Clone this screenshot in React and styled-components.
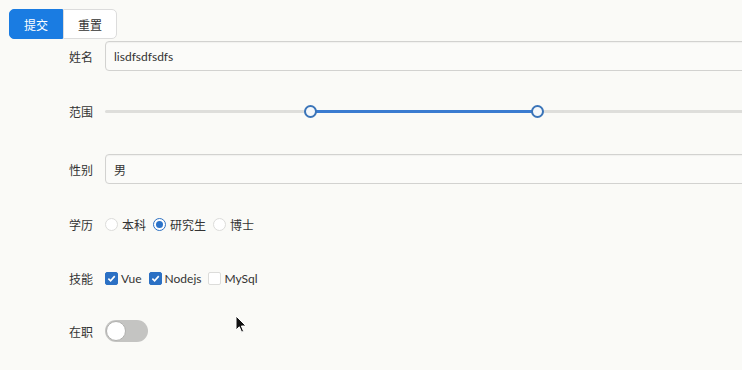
import React, { useState } from 'react';
import styled, { createGlobalStyle } from 'styled-components';

const GlobalStyle = createGlobalStyle`
  html, body {
    margin: 0;
    padding: 0;
    background: #fafaf7;
    overflow: hidden;
  }
  body {
    font-family: Lato, "Noto Sans CJK SC", sans-serif;
    font-size: 12px;
    color: #333;
  }
`;

const Page = styled.div`
  position: relative;
  width: 742px;
  height: 370px;
  padding: 9px 0 0 9px;
  box-sizing: border-box;
  overflow: hidden;
`;

const ButtonGroup = styled.div`
  display: flex;
  height: 30px;
`;

const Button = styled.button`
  width: 54px;
  height: 30px;
  font-family: inherit;
  font-size: 12px;
  border-radius: ${(p) => (p.$primary ? '5px 0 0 5px' : '0 5px 5px 0')};
  border: 1px solid ${(p) => (p.$primary ? '#1a7ce2' : '#dcdcdc')};
  background: ${(p) => (p.$primary ? '#1a7ce2' : '#fff')};
  color: ${(p) => (p.$primary ? '#fff' : '#333')};
  cursor: pointer;
  padding: 0;
`;

const Form = styled.div`
  display: flex;
  flex-direction: column;
  margin-top: 2px;
`;

const Row = styled.div`
  display: flex;
  align-items: center;
  height: 30px;
  margin-bottom: ${(p) => p.$space || 25}px;
`;

const Label = styled.div`
  width: 96px;
  box-sizing: border-box;
  display: flex;
  justify-content: flex-end;
  padding-right: 12px;
  flex-shrink: 0;
  color: #333;
  white-space: nowrap;
`;

const TextInput = styled.input`
  width: 700px;
  height: 30px;
  box-sizing: border-box;
  border: 1px solid #d2d2d0;
  border-radius: 4px;
  background: #fbfbf9;
  padding: 0 8px;
  font-family: inherit;
  font-size: 12px;
  color: #333;
  box-shadow: inset 0 1px 1px rgba(0, 0, 0, 0.04);
  outline: none;
  flex-shrink: 0;
`;

const Slider = styled.div`
  position: relative;
  width: 686px;
  height: 30px;
  flex-shrink: 0;
`;

const Track = styled.div`
  position: absolute;
  left: 0;
  right: 0;
  top: 14px;
  height: 3px;
  background: #dededb;
  border-radius: 2px;
`;

const ActiveTrack = styled.div`
  position: absolute;
  top: 14px;
  height: 3px;
  background: #3a7bd0;
`;

const Thumb = styled.div`
  position: absolute;
  top: 9px;
  width: 13px;
  height: 13px;
  margin-left: -6.5px;
  box-sizing: border-box;
  border-radius: 50%;
  border: 2px solid #3a74b8;
  background: #f4f7fa;
`;

const Options = styled.div`
  display: flex;
  align-items: center;
`;

const Option = styled.label`
  display: flex;
  align-items: center;
  margin-right: 7px;
  color: #333;
`;

const Radio = styled.span`
  width: 13px;
  height: 13px;
  box-sizing: border-box;
  border-radius: 50%;
  border: ${(p) => (p.$on ? '1px solid #2c6fc1' : '1px solid #dcdcda')};
  background: #fff;
  margin-right: 4px;
  display: flex;
  align-items: center;
  justify-content: center;
  &::after {
    content: '';
    display: ${(p) => (p.$on ? 'block' : 'none')};
    width: 7px;
    height: 7px;
    border-radius: 50%;
    background: #2c73c9;
  }
`;

const Box = styled.span`
  width: 13px;
  height: 13px;
  box-sizing: border-box;
  border-radius: 2px;
  border: 1px solid ${(p) => (p.$on ? '#2b70c4' : '#dcdcda')};
  background: ${(p) => (p.$on ? '#2b70c4' : '#fff')};
  margin-right: 3px;
  display: flex;
  align-items: center;
  justify-content: center;
`;

const Switch = styled.div`
  width: 43px;
  height: 22px;
  border-radius: 11px;
  background: #c4c4c2;
  position: relative;
  flex-shrink: 0;
`;

const Knob = styled.div`
  position: absolute;
  left: 1px;
  top: 1px;
  width: 20px;
  height: 20px;
  box-sizing: border-box;
  border-radius: 50%;
  background: #fff;
  border: 1px solid #b0b0ae;
`;

const Cursor = styled.svg`
  position: absolute;
  left: 235px;
  top: 315px;
`;

const Check = () => (
  <svg width="9" height="9" viewBox="0 0 10 10">
    <path d="M1.5 5.2 L4 7.6 L8.6 2.4" fill="none" stroke="#fff" strokeWidth="1.8" />
  </svg>
);

const RANGE = [30, 63];

export default function App() {
  const [name] = useState('lisdfsdfsdfs');
  const [degree] = useState('研究生');
  const [skills] = useState(['Vue', 'Nodejs']);

  return (
    <Page>
      <GlobalStyle />
      <ButtonGroup>
        <Button $primary>提交</Button>
        <Button>重置</Button>
      </ButtonGroup>
      <Form>
        <Row>
          <Label>姓名</Label>
          <TextInput value={name} readOnly />
        </Row>
        <Row $space={28}>
          <Label>范围</Label>
          <Slider>
            <Track />
            <ActiveTrack style={{ left: `${RANGE[0]}%`, width: `${RANGE[1] - RANGE[0]}%` }} />
            <Thumb style={{ left: `${RANGE[0]}%` }} />
            <Thumb style={{ left: `${RANGE[1]}%` }} />
          </Slider>
        </Row>
        <Row>
          <Label>性别</Label>
          <TextInput value="男" readOnly />
        </Row>
        <Row $space={24}>
          <Label>学历</Label>
          <Options>
            {['本科', '研究生', '博士'].map((d) => (
              <Option key={d}>
                <Radio $on={degree === d} />
                {d}
              </Option>
            ))}
          </Options>
        </Row>
        <Row $space={23}>
          <Label>技能</Label>
          <Options>
            {['Vue', 'Nodejs', 'MySql'].map((s) => (
              <Option key={s}>
                <Box $on={skills.includes(s)}>{skills.includes(s) && <Check />}</Box>
                {s}
              </Option>
            ))}
          </Options>
        </Row>
        <Row>
          <Label>在职</Label>
          <Switch>
            <Knob />
          </Switch>
        </Row>
      </Form>
      <Cursor width="12" height="19" viewBox="0 0 12 19">
        <path d="M1 1 L1 15 L4.3 11.8 L6.6 17.2 L8.6 16.3 L6.4 11 L11 11 Z" fill="#111" stroke="#fff" strokeWidth="1" />
      </Cursor>
    </Page>
  );
}
